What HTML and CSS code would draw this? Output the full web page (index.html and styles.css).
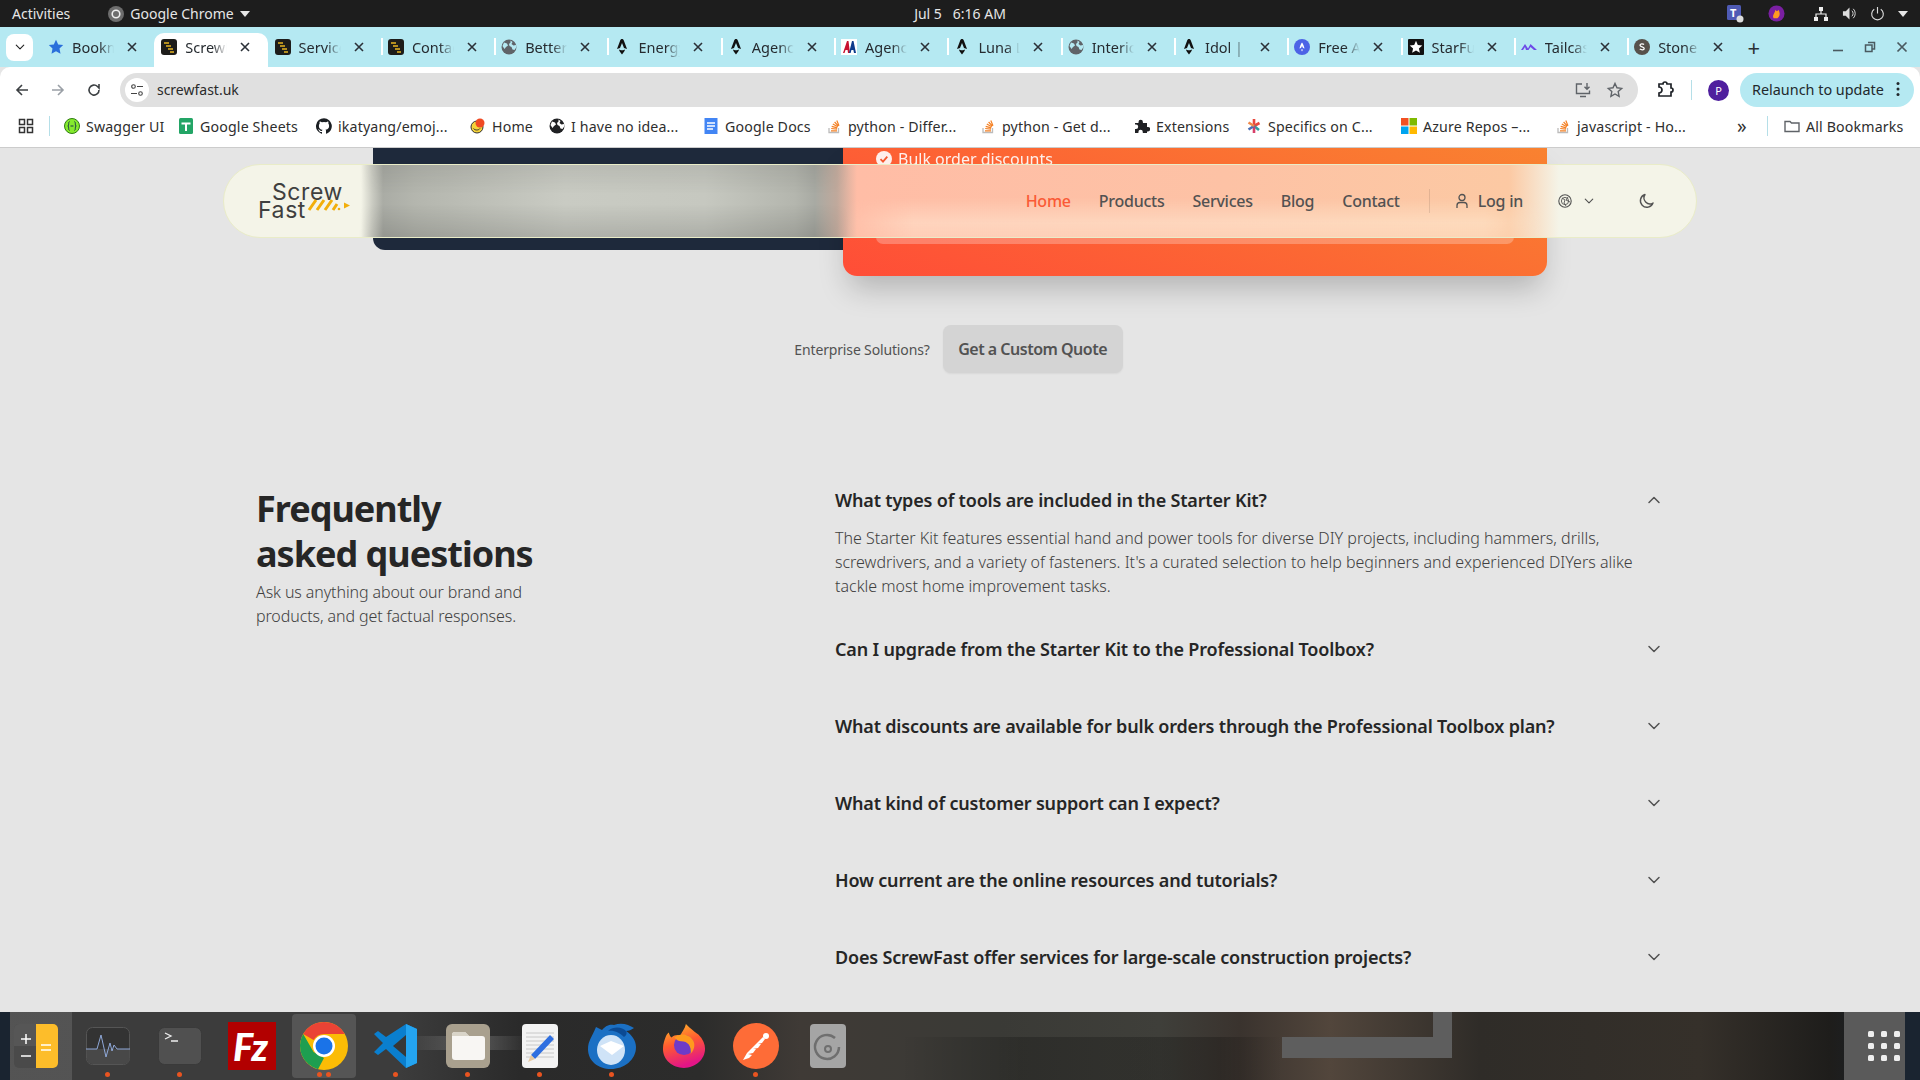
FILE: index.html
```html
<!DOCTYPE html>
<html lang="en">
<head>
<meta charset="utf-8">
<title>ScrewFast</title>
<link rel="stylesheet" href="styles.css">
</head>
<body>
<svg class="defs" width="0" height="0" aria-hidden="true">
  <symbol id="i-close" viewBox="0 0 12 12"><path d="M2 2l8 8M10 2l-8 8" stroke="#2b3138" stroke-width="1.6" fill="none"/></symbol>
  <symbol id="i-sf" viewBox="0 0 16 16"><rect width="16" height="16" rx="3" fill="#1d1c1a"/><path d="M3 4h5M5 7h5M7 10h5M9 13h4" stroke="#e6b422" stroke-width="1.6"/></symbol>
  <symbol id="i-globe" viewBox="0 0 16 16"><circle cx="8" cy="8" r="7.5" fill="#5f6368"/><path d="M3 3.5l3 1 1 2-2 1.500-1.500 2L1.500 7zM9.500 1.500l2 1.500-1 2 2 1.500 2.500-.5.5 2-2 3-2-.5-1-2.500-2-1-.5-2 1.500-1.500z" fill="#b5e9f2"/></symbol>
  <symbol id="i-astro" viewBox="0 0 16 16"><path d="M8 0c1 0 1.500.5 2 2l3 8-3-1-2-5-2 5-3 1 3-8c.5-1.500 1-2 2-2z" fill="#111"/><path d="M5 10.500c1 1 5 1 6 0 0 1.500-1.500 2.500-3 5-1.500-2.500-3-3.500-3-5z" fill="#111"/></symbol>
  <symbol id="i-so" viewBox="0 0 16 16"><path d="M3 10v4.500h9.500V10" fill="none" stroke="#bcbbbb" stroke-width="1.300"/><path d="M5 12.800h6M5.200 10.500l5.800.6M5.700 8.300l5.600 1.600M6.800 6l5 2.800M8.600 4l3.800 4.200M10.800 2.500l2.200 5.200" stroke="#f48024" stroke-width="1.200" fill="none"/></symbol>
  <symbol id="i-chev" viewBox="0 0 16 16"><path d="M3 5.500l5 5 5-5" fill="none" stroke="currentColor" stroke-width="1.500" stroke-linecap="round" stroke-linejoin="round"/></symbol>
</svg>

<header class="topbar">
  <div class="top-left">
    <span class="top-item">Activities</span>
    <span class="top-chrome">
      <svg class="ico16" viewBox="0 0 16 16"><circle cx="8" cy="8" r="8" fill="#6d6d6d"/><circle cx="8" cy="8" r="3.800" fill="none" stroke="#eee" stroke-width="1.600"/></svg>
      Google Chrome <i class="caret"></i>
    </span>
  </div>
  <div class="top-clock">Jul 5&nbsp;&nbsp; 6:16 AM</div>
  <div class="top-tray">
    <svg class="tray-teams" viewBox="0 0 18 18"><rect width="14" height="15" rx="1.500" fill="#4f5bb5"/><text x="3" y="12" class="tray-t">T</text><circle cx="13" cy="14" r="3.500" fill="#ddd"/></svg>
    <svg class="tray-fire" viewBox="0 0 18 18"><circle cx="9" cy="9" r="8.500" fill="#7a1fa2"/><path d="M6 14c-2-3 1-5 2-9 1 2 2 2 3 0 2 3 2 7-1 9z" fill="#ff9a1f"/></svg>
    <svg class="tray-net" viewBox="0 0 16 16"><path d="M6 1h4v4H6zM1 11h4v4H1zM11 11h4v4h-4z" fill="#eee"/><path d="M8 5v3M3 11V8h10v3" stroke="#eee" fill="none" stroke-width="1.200"/></svg>
    <svg class="tray-vol" viewBox="0 0 16 16"><path d="M1 5.500h3l4-4v13l-4-4H1z" fill="#ddd"/><path d="M10.500 5a4 4 0 010 6M12 3a7 7 0 010 10" stroke="#ddd" fill="none"/></svg>
    <svg class="tray-pow" viewBox="0 0 16 16"><path d="M4.500 3.500a6.200 6.200 0 107 0M8 1v7" stroke="#ddd" fill="none" stroke-width="1.200"/></svg>
    <i class="caret"></i>
  </div>
</header>

<nav class="tabstrip">
  <button class="tab-drop"><svg class="ico12 dark" viewBox="0 0 16 16"><use href="#i-chev"/></svg></button>
  <div class="tabs">
    <div class="tab">
      <svg class="tab-ico" viewBox="0 0 16 16"><path d="M8 .8l2.200 4.700 5 .6-3.700 3.500 1 5.100L8 12.200l-4.500 2.500 1-5.100L.8 6.100l5-.6z" fill="#2a6fdb"/></svg>
      <span class="tab-title">Bookmarks</span><svg class="tab-x"><use href="#i-close"/></svg>
    </div>
    <div class="tab tab-active">
      <svg class="tab-ico"><use href="#i-sf"/></svg>
      <span class="tab-title">ScrewFast</span><svg class="tab-x"><use href="#i-close"/></svg>
    </div>
    <div class="tab tab-nosep">
      <svg class="tab-ico"><use href="#i-sf"/></svg>
      <span class="tab-title">Services</span><svg class="tab-x"><use href="#i-close"/></svg>
    </div>
    <div class="tab">
      <svg class="tab-ico"><use href="#i-sf"/></svg>
      <span class="tab-title">Contact</span><svg class="tab-x"><use href="#i-close"/></svg>
    </div>
    <div class="tab">
      <svg class="tab-ico"><use href="#i-globe"/></svg>
      <span class="tab-title">Better</span><svg class="tab-x"><use href="#i-close"/></svg>
    </div>
    <div class="tab">
      <svg class="tab-ico"><use href="#i-astro"/></svg>
      <span class="tab-title">Energy</span><svg class="tab-x"><use href="#i-close"/></svg>
    </div>
    <div class="tab">
      <svg class="tab-ico"><use href="#i-astro"/></svg>
      <span class="tab-title">Agency</span><svg class="tab-x"><use href="#i-close"/></svg>
    </div>
    <div class="tab">
      <svg class="tab-ico" viewBox="0 0 16 16"><rect width="16" height="16" fill="#fff"/><path d="M2 14L6 2h1.500L9 14H7l-.4-3H4.500l-1 3z" fill="#c8102e"/><path d="M8 14l3-12h1.500L15 14h-2l-.6-3h-2l-.8 3z" fill="#0d3b8c"/></svg>
      <span class="tab-title">Agency</span><svg class="tab-x"><use href="#i-close"/></svg>
    </div>
    <div class="tab">
      <svg class="tab-ico"><use href="#i-astro"/></svg>
      <span class="tab-title">Luna Lite</span><svg class="tab-x"><use href="#i-close"/></svg>
    </div>
    <div class="tab">
      <svg class="tab-ico"><use href="#i-globe"/></svg>
      <span class="tab-title">Interior</span><svg class="tab-x"><use href="#i-close"/></svg>
    </div>
    <div class="tab">
      <svg class="tab-ico"><use href="#i-astro"/></svg>
      <span class="tab-title">Idol | Next</span><svg class="tab-x"><use href="#i-close"/></svg>
    </div>
    <div class="tab">
      <svg class="tab-ico" viewBox="0 0 16 16"><circle cx="8" cy="8" r="8" fill="#4c63e6"/><path d="M8 3.500c1 1 2 3.500 2.500 6l-1.500-.5-1-2-1 2-1.500.5C6 7 7 4.500 8 3.500zM7 10.500h2L8 12.500z" fill="#fff"/></svg>
      <span class="tab-title">Free Astro</span><svg class="tab-x"><use href="#i-close"/></svg>
    </div>
    <div class="tab">
      <svg class="tab-ico" viewBox="0 0 16 16"><rect width="16" height="16" rx="1" fill="#111"/><path d="M8 1.800l1.800 4.200 4.500.4-3.400 3 1 4.400L8 11.500l-3.900 2.300 1-4.400-3.400-3 4.500-.4z" fill="#fff"/></svg>
      <span class="tab-title">StarFunnel</span><svg class="tab-x"><use href="#i-close"/></svg>
    </div>
    <div class="tab">
      <svg class="tab-ico" viewBox="0 0 16 16"><path d="M0 11l4-6 3 4.500L9.500 5 16 11h-3L9.500 8 7.500 11H5L4 8l-2 3z" fill="#6d4ae8"/></svg>
      <span class="tab-title">Tailcast</span><svg class="tab-x"><use href="#i-close"/></svg>
    </div>
    <div class="tab">
      <svg class="tab-ico" viewBox="0 0 16 16"><circle cx="8" cy="8" r="8" fill="#57514b"/><path d="M10 5.500c-1-1-4-1-4 .8 0 2 4.200 1.200 4.200 3.200 0 1.800-3.200 1.600-4.400.4" stroke="#fff" stroke-width="1.300" fill="none"/></svg>
      <span class="tab-title">Stone Rows</span><svg class="tab-x"><use href="#i-close"/></svg>
    </div>
  </div>
  <span class="tab-new">+</span>
  <div class="win-ctrls">
    <svg class="win-ico" viewBox="0 0 12 12"><path d="M1 9.500h10" stroke="#4a5a60" stroke-width="1.600"/></svg>
    <svg class="win-ico" viewBox="0 0 12 12"><path d="M4 1.500h6.500V8H8M1.500 4H8v6.500H1.500z" stroke="#4a5a60" stroke-width="1.500" fill="none"/></svg>
    <svg class="win-ico" viewBox="0 0 12 12"><path d="M1.500 1.500l9 9M10.500 1.500l-9 9" stroke="#4a5a60" stroke-width="1.700"/></svg>
  </div>
</nav>

<section class="toolbar">
  <div class="tool-nav">
    <svg class="ico16" viewBox="0 0 16 16"><path d="M14 8H3M8 3L3 8l5 5" fill="none" stroke="#3c4043" stroke-width="1.600"/></svg>
    <svg class="ico16" viewBox="0 0 16 16"><path d="M2 8h11M8 3l5 5-5 5" fill="none" stroke="#9aa0a6" stroke-width="1.600"/></svg>
    <svg class="ico16" viewBox="0 0 16 16"><path d="M13 8a5 5 0 11-1.500-3.500L13 6V2" fill="none" stroke="#3c4043" stroke-width="1.600"/></svg>
  </div>
  <div class="urlbar">
    <span class="site-chip"><svg class="ico14" viewBox="0 0 14 14"><circle cx="3.500" cy="3.500" r="1.800" fill="none" stroke="#444" stroke-width="1.100"/><path d="M7 3.500h6M1 10.500h6" stroke="#444" stroke-width="1.100"/><circle cx="10.500" cy="10.500" r="1.800" fill="none" stroke="#444" stroke-width="1.100"/></svg></span>
    <span class="url-text">screwfast.uk</span>
    <span class="url-end">
      <svg class="ico18" viewBox="0 0 18 18"><path d="M8 3H2.500v9.500h13V9.500M6 15.500h6" stroke="#5f6368" stroke-width="1.400" fill="none"/><path d="M13 2v6M10.500 5.800L13 8.300l2.500-2.500" stroke="#5f6368" stroke-width="1.400" fill="none"/></svg>
      <svg class="ico18" viewBox="0 0 18 18"><path d="M9 2.500l2 4.300 4.700.6-3.500 3.200.9 4.700L9 13l-4.100 2.300.9-4.700L2.300 7.400 7 6.800z" stroke="#5f6368" stroke-width="1.400" fill="none"/></svg>
    </span>
  </div>
  <div class="tool-right">
    <svg class="ico18" viewBox="0 0 18 18"><path d="M3 3h4a2 2 0 014 0h4v4a2 2 0 010 4v4H3v-3a2 2 0 000-6z" fill="none" stroke="#1f2328" stroke-width="1.700"/></svg>
    <i class="tool-sep"></i>
    <span class="avatar">P</span>
    <span class="relaunch">Relaunch to update <svg class="dots3" viewBox="0 0 4 16"><circle cx="2" cy="2.500" r="1.500"/><circle cx="2" cy="8" r="1.500"/><circle cx="2" cy="13.500" r="1.500"/></svg></span>
  </div>
</section>

<section class="bookmarks">
  <svg class="ico16" viewBox="0 0 16 16"><path d="M1.500 1.500h5v5h-5zM9.500 1.500h5v5h-5zM1.500 9.500h5v5h-5zM9.500 9.500h5v5h-5z" fill="none" stroke="#333" stroke-width="1.500"/></svg>
  <i class="bm-sep"></i>
  <span class="bm"><svg class="ico16" viewBox="0 0 16 16"><circle cx="8" cy="8" r="7.500" fill="#85ea2d" stroke="#2e7d12"/><path d="M5.500 3.500c-1.500 1-.2 3-1.500 4.500 1.300 1.500 0 3.500 1.500 4.500M10.500 3.500c1.500 1 .2 3 1.500 4.500-1.300 1.500 0 3.500-1.500 4.500M6.500 8h3" stroke="#173647" fill="none"/></svg>Swagger UI</span>
  <span class="bm"><svg class="ico16" viewBox="0 0 16 16"><rect x="1" width="14" height="16" rx="1.500" fill="#23a566"/><path d="M3.500 5.500h9M8 5.500V13" stroke="#fff" stroke-width="2"/></svg>Google Sheets</span>
  <span class="bm"><svg class="ico16" viewBox="0 0 16 16"><path d="M8 .2a8 8 0 00-2.500 15.600c.4.100.5-.2.500-.4v-1.400c-2.200.5-2.700-1-2.700-1-.4-.9-.9-1.200-.9-1.200-.7-.5.100-.5.100-.5.800.100 1.200.8 1.200.8.700 1.200 1.900.9 2.300.7.100-.5.300-.9.500-1.100-1.800-.2-3.600-.9-3.600-4 0-.9.300-1.600.8-2.100-.1-.2-.4-1 .1-2.100 0 0 .7-.2 2.200.8a7.600 7.600 0 014 0c1.500-1 2.200-.8 2.200-.8.400 1.100.2 1.900.1 2.100.5.600.8 1.300.8 2.100 0 3.100-1.900 3.700-3.600 3.900.3.200.5.700.5 1.500v2.200c0 .2.100.5.600.4A8 8 0 008 .2z" fill="#1b1f23"/></svg>ikatyang/emoj...</span>
  <span class="bm"><svg class="ico16" viewBox="0 0 16 16"><circle cx="7" cy="9" r="6" fill="#f5d33a" stroke="#333"/><path d="M3.500 10.500c1.500 2 5 2 6.500 0" stroke="#333" fill="none"/><circle cx="10" cy="5" r="4.500" fill="#f04a23"/></svg>Home</span>
  <span class="bm"><svg class="ico16" viewBox="0 0 16 16"><circle cx="8" cy="8" r="7.500" fill="#202124"/><path d="M3 3.500l3 1 1 2-2 1.500-1.500 2L1.500 7zM9.500 1.500l2 1.500-1 2 2 1.500 2.500-.5.5 2-2 3-2-.5-1-2.500-2-1-.5-2 1.500-1.500z" fill="#fff"/></svg>I have no idea...</span>
  <span class="bm"><svg class="ico16" viewBox="0 0 16 16"><path d="M1.500 0h13v16h-13z" fill="#4285f4"/><path d="M4 5h8M4 8h8M4 11h6" stroke="#fff" stroke-width="1.500"/></svg>Google Docs</span>
  <span class="bm"><svg class="ico16"><use href="#i-so"/></svg>python - Differ...</span>
  <span class="bm"><svg class="ico16"><use href="#i-so"/></svg>python - Get d...</span>
  <span class="bm"><svg class="ico16" viewBox="0 0 16 16"><path d="M1 5h3.500V4a2.200 2.200 0 014.400 0v1H13v4h1a2.200 2.200 0 010 4.400h-1V15H8.800v-1a2.200 2.200 0 00-4.400 0v1H1v-4h1a2.200 2.200 0 000-4.400H1z" fill="#202124"/></svg>Extensions</span>
  <span class="bm"><svg class="ico16" viewBox="0 0 16 16"><path d="M8 1v6" stroke="#e8483d" stroke-width="2.600"/><path d="M8 8l5.500-3" stroke="#e8483d" stroke-width="2.600"/><path d="M8 8l5 4" stroke="#2f9da0" stroke-width="2.600"/><path d="M8 8v7" stroke="#d8406a" stroke-width="2.600"/><path d="M8 8l-5.500 3.500" stroke="#4a6fb5" stroke-width="2.600"/><path d="M8 8L2.500 4.500" stroke="#f0884a" stroke-width="2.600"/></svg>Specifics on C...</span>
  <span class="bm"><svg class="ico16" viewBox="0 0 16 16"><path d="M0 0h7.500v7.500H0z" fill="#f25022"/><path d="M8.500 0H16v7.500H8.500z" fill="#7fba00"/><path d="M0 8.500h7.500V16H0z" fill="#00a4ef"/><path d="M8.500 8.500H16V16H8.500z" fill="#ffb900"/></svg>Azure Repos –...</span>
  <span class="bm"><svg class="ico16"><use href="#i-so"/></svg>javascript - Ho...</span>
  <span class="bm-more">»</span>
  <i class="bm-sep"></i>
  <span class="bm"><svg class="ico16" viewBox="0 0 16 16"><path d="M1 3.500h5l1.500 1.500h7.500v8.500H1z" fill="none" stroke="#5f6368" stroke-width="1.400"/></svg>All Bookmarks</span>
</section>

<main class="page">
  <header class="site-nav">
    <a class="logo">
      <svg class="logo-svg" viewBox="0 0 92 37">
        <text x="14" y="17" class="logo-text">Screw</text>
        <text x="0" y="35" class="logo-text">Fast</text>
        <path d="M51 27l7-10M59 27l7-10M67 27l7-10M75 27l4-6" stroke="#f2ae0a" stroke-width="3" fill="none"/>
        <path d="M86 19.500l6 3-6 3z" fill="#f2ae0a"/>
        <circle cx="81" cy="26" r="1.300" fill="#f2ae0a"/>
      </svg>
    </a>
    <div class="nav-links">
      <a class="nav-link nav-home">Home</a>
      <a class="nav-link">Products</a>
      <a class="nav-link">Services</a>
      <a class="nav-link">Blog</a>
      <a class="nav-link nav-last">Contact</a>
      <i class="nav-div"></i>
      <a class="nav-link nav-login">
        <svg class="ico16" viewBox="0 0 16 16"><circle cx="8" cy="4.500" r="3" fill="none" stroke="#525252" stroke-width="1.300"/><path d="M3 15v-2.500c0-2 1.500-3 3-3h4c1.500 0 3 1 3 3V15" fill="none" stroke="#525252" stroke-width="1.300"/></svg>
        Log in
      </a>
      <span class="nav-lang">
        <svg class="ico14" viewBox="0 0 14 14"><circle cx="7" cy="7" r="6.200" fill="none" stroke="#525252" stroke-width="1.100"/><circle cx="7" cy="7" r="3.600" fill="none" stroke="#525252" stroke-width=".9"/><path d="M4 4l3 2-1 3 2 3M10 3L8 6l4 2" fill="none" stroke="#525252" stroke-width=".9"/></svg>
        <svg class="ico12 nav-chev" viewBox="0 0 16 16"><use href="#i-chev"/></svg>
      </span>
      <svg class="ico16 nav-moon" viewBox="0 0 16 16"><path d="M7 1.500a6.500 6.500 0 108 8.500A6 6 0 017 1.500z" fill="none" stroke="#525252" stroke-width="1.400" stroke-linejoin="round"/></svg>
    </div>
  </header>

  <div class="pricing">
    <div class="card-dark"></div>
    <div class="card-orange">
      <p class="perk"><svg class="ico16" viewBox="0 0 16 16"><circle cx="8" cy="8" r="8" fill="#fff"/><path d="M4.500 8.200l2.500 2.500 4.300-5" fill="none" stroke="#f4582f" stroke-width="1.800"/></svg>Bulk order discounts</p>
      <div class="card-btn"></div>
    </div>
  </div>

  <div class="enterprise">
    <span class="ent-label">Enterprise Solutions?</span>
    <a class="ent-btn">Get a Custom Quote</a>
  </div>

  <section class="faq">
    <div class="faq-intro">
      <h2 class="faq-h">Frequently<br>asked questions</h2>
      <p class="faq-sub">Ask us anything about our brand and<br>products, and get factual responses.</p>
    </div>
    <div class="faq-list">
      <div class="qa qa-open">
        <div class="q"><span>What types of tools are included in the Starter Kit?</span><svg class="ico16 q-chev q-up" viewBox="0 0 16 16"><use href="#i-chev"/></svg></div>
        <p class="a">The Starter Kit features essential hand and power tools for diverse DIY projects, including hammers, drills, screwdrivers, and a variety of fasteners. It's a curated selection to help beginners and experienced DIYers alike tackle most home improvement tasks.</p>
      </div>
      <div class="qa"><div class="q"><span>Can I upgrade from the Starter Kit to the Professional Toolbox?</span><svg class="ico16 q-chev" viewBox="0 0 16 16"><use href="#i-chev"/></svg></div></div>
      <div class="qa"><div class="q"><span>What discounts are available for bulk orders through the Professional Toolbox plan?</span><svg class="ico16 q-chev" viewBox="0 0 16 16"><use href="#i-chev"/></svg></div></div>
      <div class="qa"><div class="q"><span>What kind of customer support can I expect?</span><svg class="ico16 q-chev" viewBox="0 0 16 16"><use href="#i-chev"/></svg></div></div>
      <div class="qa"><div class="q"><span>How current are the online resources and tutorials?</span><svg class="ico16 q-chev" viewBox="0 0 16 16"><use href="#i-chev"/></svg></div></div>
      <div class="qa"><div class="q"><span>Does ScrewFast offer services for large-scale construction projects?</span><svg class="ico16 q-chev" viewBox="0 0 16 16"><use href="#i-chev"/></svg></div></div>
    </div>
  </section>
</main>

<footer class="dock">
  <div class="dock-item">
    <svg class="dock-ico" viewBox="0 0 44 44"><rect width="44" height="44" rx="5" fill="#4a4a4a"/><path d="M22 0h17a5 5 0 015 5v34a5 5 0 01-5 5H22z" fill="#fdbd2a"/><path d="M0 22V5a5 5 0 015-5h17v22z" fill="#565656"/><path d="M7 15h10M12 10v10M7 32h10" stroke="#fff" stroke-width="1.500"/><path d="M27 21h10M27 26h10" stroke="#fff" stroke-width="1.500"/></svg>
  </div>
  <div class="dock-item dock-run">
    <svg class="dock-ico" viewBox="0 0 44 38"><rect x=".5" y=".5" width="43" height="37" rx="6" fill="#333" stroke="#555"/><path d="M.5 22h43v10a5 5 0 01-5 5H6a5 5 0 01-5-5z" fill="#484848"/><path d="M0 22h11l4-14 5 22 4-14 2 8 2-6 3 4h13" fill="none" stroke="#8fa8d8" stroke-width="1"/></svg>
  </div>
  <div class="dock-item dock-run">
    <svg class="dock-ico" viewBox="0 0 44 38"><rect x=".5" y=".5" width="43" height="37" rx="6" fill="#505050" stroke="#3a3a3a"/><path d="M7 6l6 3-6 3M13 14h7" fill="none" stroke="#eee" stroke-width="1.300"/></svg>
  </div>
  <div class="dock-item">
    <svg class="dock-ico dock-fz" viewBox="0 0 48 48"><rect width="48" height="48" fill="#b20000" stroke="#b20000" stroke-width="1" stroke-dasharray="2 2"/><text x="5" y="39" class="fz-text">Fz</text></svg>
  </div>
  <div class="dock-item dock-chrome dock-run2">
    <svg class="dock-ico dock-48" viewBox="0 0 48 48"><circle cx="24" cy="24" r="24" fill="#fbbc05"/><path d="M24 0a24 24 0 0120.800 12H24a12 12 0 00-10.400 6L3.200 12A24 24 0 0124 0z" fill="#ea4335"/><path d="M3.200 12L13.600 30 24 36 18 47.200A24 24 0 013.200 12z" fill="#1e9e50"/><circle cx="24" cy="24" r="11" fill="#fff"/><circle cx="24" cy="24" r="8.500" fill="#1a73e8"/></svg>
  </div>
  <div class="dock-item dock-run">
    <svg class="dock-ico" viewBox="0 0 44 44"><path d="M32 0l11 5v34l-11 5-20-19-8 6-4-3 9-9-9-9 4-3 8 6z" fill="#0a7fcf"/><path d="M32 0l11 5v34l-11 5z" fill="#24a4f0"/><path d="M32 11L19 22l13 11z" fill="#373737"/></svg>
  </div>
  <div class="dock-item dock-run">
    <svg class="dock-ico" viewBox="0 0 44 44"><rect width="44" height="44" rx="6" fill="#a9a08e"/><path d="M6 11a3 3 0 013-3h10l4 4h13a3 3 0 013 3v18a3 3 0 01-3 3H9a3 3 0 01-3-3z" fill="#f8f6f3"/><path d="M6 11a3 3 0 013-3h10l4 4H6z" fill="#d9d4c8"/></svg>
  </div>
  <div class="dock-item dock-run">
    <svg class="dock-ico dock-36" viewBox="0 0 36 44"><rect width="36" height="44" rx="4" fill="#f3f3f3"/><path d="M4 9h28M4 13h28M4 17h28M4 21h28M4 25h28M4 29h28M4 33h28" stroke="#c8c8c8"/><path d="M9 31L28 11l4 4-19 20z" fill="#2f6fe0"/><path d="M9 31l4 4-7 3z" fill="#e8c9a0"/></svg>
  </div>
  <div class="dock-item dock-run">
    <svg class="dock-ico dock-48" viewBox="0 0 48 46"><path d="M8 4C4 14 0 18 0 26c0 12 10 20 23 20s25-9 25-22C48 18 44 12 38 8c3 0 5-1 8-3-5-3-12-6-20-3-6-1-9 2-12 5-2-1-4-2-6-3z" fill="#1b70c4"/><path d="M38 8c-4-4-12-5-18 0 6-1 12 2 16 6 3-2 3-4 2-6z" fill="#0b4a94"/><ellipse cx="23" cy="27" rx="14" ry="15" fill="#cfe3f7"/><path d="M12 23l11-5 13 5-12 9z" fill="#fff"/></svg>
  </div>
  <div class="dock-item">
    <svg class="dock-ico" viewBox="0 0 44 46"><defs><linearGradient id="ffg" x1="0" y1="0" x2=".3" y2="1"><stop offset="0" stop-color="#ffc328"/><stop offset=".5" stop-color="#ff5a30"/><stop offset="1" stop-color="#e31587"/></linearGradient></defs><path d="M24 0c6 6 9 8 13 11 5 5 7 10 7 15 0 11-10 20-22 20S0 38 0 26c0-6 2-10 3-13 1-2 2-3 3-4 1 2 1 4 3 5 3-3 7-3 9-2 2-4 5-7 6-12z" fill="url(#ffg)"/><circle cx="22" cy="22" r="10.500" fill="#6e3bc8"/><path d="M12 14c6-5 16-4 20 4 2 5 0 10-3 13 1-8-3-13-10-13-3 0-5-2-7-4z" fill="#ff9a1e"/></svg>
  </div>
  <div class="dock-item dock-run">
    <svg class="dock-ico dock-46" viewBox="0 0 46 46"><circle cx="23" cy="23" r="23" fill="#fe6c37"/><circle cx="33" cy="13" r="3" fill="#fff"/><path d="M30 14L14 30l-4 7 6-2 3-3-4-1 5-1 3-4-3 0 5-1 3-4-3 0 4-1 3-4z" fill="#fff"/></svg>
  </div>
  <div class="dock-item">
    <svg class="dock-ico dock-36" viewBox="0 0 36 44"><rect width="36" height="44" rx="4" fill="#a5a5a5"/><path d="M25 14a12 12 0 10 4 9" fill="none" stroke="#6f6f6f" stroke-width="2.500"/><circle cx="18" cy="25" r="3" fill="none" stroke="#6f6f6f" stroke-width="2"/></svg>
  </div>
  <div class="dock-spacer"></div>
  <div class="dock-apps">
    <span></span><span></span><span></span><span></span><span></span><span></span><span></span><span></span><span></span>
  </div>
</footer>
</body>
</html>
```

FILE: styles.css
```css
* { box-sizing: border-box; }
html, body { margin: 0; padding: 0; height: 100%; overflow: hidden; }
body {
  width: 1920px;
  height: 1080px;
  display: flex;
  flex-direction: column;
  font-family: "Noto Sans", Lato, sans-serif;
  background: #e5e5e5;
}
svg { display: block; flex: none; }
.defs { position: absolute; }
i { display: block; }
.ico12 { width: 12px; height: 12px; }
.ico14 { width: 14px; height: 14px; }
.ico16 { width: 16px; height: 16px; }
.ico18 { width: 18px; height: 18px; }
.dark { color: #222; }

/* GNOME bar */
.topbar {
  height: 27px;
  flex: none;
  background: #1d1d1d;
  color: #e6e6e6;
  font-size: 14px;
  display: grid;
  grid-template-columns: 1fr auto 1fr;
  align-items: center;
  padding: 0 12px;
}
.top-left { display: flex; align-items: center; gap: 38px; }
.top-chrome { display: flex; align-items: center; gap: 6px; }
.caret { width: 0; height: 0; border: 5px solid transparent; border-top: 6px solid #e6e6e6; border-bottom: 0; }
.top-tray { display: flex; align-items: center; justify-content: flex-end; gap: 13px; }
.tray-teams { width: 18px; height: 18px; margin-right: 10px; }
.tray-fire { width: 17px; height: 17px; margin-right: 15px; }
.tray-net { width: 16px; height: 16px; }
.tray-vol { width: 15px; height: 15px; }
.tray-pow { width: 15px; height: 15px; }
.tray-t { font: bold 11px "Noto Sans", sans-serif; fill: #fff; }

/* tabs */
.tabstrip {
  height: 40px;
  flex: none;
  background: #b5e9f2;
  display: flex;
  align-items: center;
  padding-left: 6px;
  color: #262b30;
}
.tab-drop {
  width: 27px;
  height: 27px;
  margin-right: 8px;
  border: 0;
  border-radius: 8px;
  background: #fff;
  display: flex;
  align-items: center;
  justify-content: center;
  padding: 0;
}
.tabs { display: flex; height: 100%; }
.tab {
  width: 113.300px;
  height: 100%;
  display: flex;
  align-items: center;
  padding: 0 0 0 7px;
  position: relative;
  font-size: 14.500px;
}
.tab::before {
  content: "";
  position: absolute;
  left: 0;
  top: 11px;
  width: 2px;
  height: 17px;
  background: #fff;
}
.tab:first-child::before, .tab-active::before, .tab-nosep::before { display: none; }
.tab-active {
  background: #fff;
  border-radius: 10px 10px 0 0;
  margin-top: 6px;
  height: 34px;
  padding-bottom: 6px;
}
.tab-ico { width: 16px; height: 16px; }
.tab-title {
  width: 42px;
  margin-left: 8px;
  white-space: nowrap;
  overflow: hidden;
  -webkit-mask-image: linear-gradient(90deg, #000 65%, transparent);
  mask-image: linear-gradient(90deg, #000 65%, transparent);
}
.tab-x { width: 12px; height: 12px; margin-left: 12px; }
.tab-new { font-size: 22px; color: #2a3036; margin-left: 7px; line-height: 1; }
.win-ctrls { margin-left: auto; display: flex; gap: 20px; padding-right: 12px; }
.win-ico { width: 12px; height: 12px; }

/* toolbar */
.toolbar {
  height: 40px;
  flex: none;
  background: #fff;
  border-radius: 10px 10px 0 0;
  display: flex;
  align-items: flex-end;
  padding: 0 6px 0 14px;
}
.tool-nav { display: flex; gap: 20px; align-items: center; height: 34px; width: 106px; }
.urlbar {
  height: 34px;
  width: 1519px;
  background: #e0e0e0;
  border-radius: 17px;
  display: flex;
  align-items: center;
  padding: 0 14px 0 5px;
}
.site-chip {
  width: 24px;
  height: 24px;
  border-radius: 50%;
  background: #fff;
  display: flex;
  align-items: center;
  justify-content: center;
}
.url-text { margin-left: 8px; font-size: 14px; color: #2b2b2b; padding-bottom: 2px; }
.url-end { margin-left: auto; display: flex; gap: 14px; align-items: center; }
.tool-right { display: flex; align-items: center; height: 34px; margin-left: 18px; }
.tool-sep { width: 1px; height: 20px; background: #b5dfe8; margin: 0 16px 0 17px; }
.avatar {
  width: 21px;
  height: 21px;
  border-radius: 50%;
  background: #4f1f9e;
  color: #fff;
  font-size: 11px;
  display: flex;
  align-items: center;
  justify-content: center;
}
.relaunch {
  width: 174px;
  height: 34px;
  margin-left: 11px;
  background: #b5e9f2;
  border-radius: 17px;
  display: flex;
  align-items: center;
  padding: 0 0 2px 12px;
  font-size: 14.400px;
  color: #22282c;
  white-space: nowrap;
}
.dots3 { width: 4px; height: 16px; margin-left: auto; margin-right: 14px; fill: #22282c; }

/* bookmarks */
.bookmarks {
  height: 41px;
  flex: none;
  background: #fff;
  border-bottom: 1px solid #ccc;
  display: grid;
  grid-template-columns: 31px 15px 114px 138px 154px 79px 154px 123px 154px 154px 112px 155px 154px 182px 30px 17px 1fr;
  align-items: center;
  padding: 0 0 2px 18px;
  font-size: 14.200px;
  letter-spacing: .15px;
  color: #2e2e2e;
  white-space: nowrap;
}
.bm-sep { width: 1px; height: 20px; background: #b5dfe8; }
.bm { display: flex; align-items: center; gap: 6px; }
.bm-more { font-size: 19px; color: #333; line-height: 1; }

/* page */
.page {
  flex: 1;
  min-height: 0;
  position: relative;
  overflow: hidden;
  background: #e5e5e5;
  color: #262626;
}
.site-nav {
  position: absolute;
  z-index: 5;
  left: 223px;
  top: 16px;
  width: 1474px;
  height: 74px;
  border-radius: 37px;
  border: 1px solid #e9ecc8;
  background: linear-gradient(90deg,
      #f4f4e8 137px, #c8c9c0 149px, #aaaca5 159px, #b4b6ae 191px,
      #c9cbc3 341px, #c6c8c0 481px, #b4b6ae 571px, #a8aaa3 591px,
      #c0a99c 613px, #ffbda6 633px, #fdc2a5 1001px, #fcc9a3 1285px,
      #f4f4e8 1335px);
  display: flex;
  align-items: center;
  padding: 0 42px 0 34px;
}
.site-nav::before, .site-nav::after {
  content: "";
  position: absolute;
  inset: 0;
  z-index: -1;
  border-radius: inherit;
}
.site-nav::before {
  background: linear-gradient(180deg, rgba(0,0,0,.08), transparent 40%, transparent 55%, rgba(0,0,0,.13));
  -webkit-mask-image: linear-gradient(90deg, transparent 135px, #000 160px, #000 590px, transparent 625px);
  mask-image: linear-gradient(90deg, transparent 135px, #000 160px, #000 590px, transparent 625px);
}
.site-nav::after {
  background: linear-gradient(180deg, transparent 45%, rgba(255,245,225,.4) 80%, rgba(255,245,225,.3));
  -webkit-mask-image: linear-gradient(90deg, transparent 620px, #000 690px, #000 1260px, transparent 1320px);
  mask-image: linear-gradient(90deg, transparent 620px, #000 690px, #000 1260px, transparent 1320px);
}
.logo { display: block; }
.logo-svg { width: 92px; height: 37px; overflow: visible; }
.logo-text { font: 400 23px Inter, Lato, sans-serif; fill: #3f3f3f; letter-spacing: .6px; }
.nav-links {
  margin-left: auto;
  display: flex;
  align-items: center;
  font-size: 16px;
  font-weight: 500;
  letter-spacing: -.25px;
  color: #525252;
}
.nav-link { display: flex; align-items: center; gap: 8px; margin-right: 28px; white-space: nowrap; }
.nav-home { color: #fa5a36; }
.nav-last { margin-right: 29px; }
.nav-div { width: 1px; height: 24px; background: rgba(0, 0, 0, .1); margin-right: 24px; }
.nav-login { margin-right: 35px; }
.nav-lang { display: flex; align-items: center; gap: 11px; color: #525252; margin-right: 43px; }
.nav-chev { color: #525252; }

/* pricing remains */
.pricing { display: flex; height: 128px; padding-left: 373px; align-items: flex-start; }
.card-dark { width: 471px; height: 102px; background: #1e293b; border-radius: 0 0 0 12px; }
.card-orange {
  width: 704px;
  height: 128px;
  padding: 2px 33px 0;
  display: flex;
  flex-direction: column;
  border-radius: 0 0 14px 14px;
  background: linear-gradient(20deg, #ff4d37, #f98230);
  box-shadow: 0 18px 30px -6px rgba(0, 0, 0, .22);
  color: #fff;
  margin-left: -1px;
}
.perk { margin: 0; display: flex; align-items: center; gap: 6px; font-size: 16px; height: 18px; font-weight: 400; opacity: .9; }
.card-btn { height: 46px; margin-top: 30px; border-radius: 0 0 7px 7px; background: rgba(255, 255, 255, .26); }
.enterprise {
  display: flex;
  align-items: center;
  justify-content: center;
  gap: 13px;
  margin-top: 49px;
  height: 48px;
  padding-right: 3px;
}
.ent-label { font-size: 14px; letter-spacing: -.15px; color: #525252; }
.ent-btn {
  width: 180px;
  height: 48px;
  border-radius: 8px;
  background: #d4d4d4;
  color: #525252;
  font-size: 16px;
  font-weight: 600;
  letter-spacing: -.5px;
  display: flex;
  align-items: center;
  justify-content: center;
  box-shadow: 0 1px 2px rgba(0, 0, 0, .06);
}

/* FAQ */
.faq {
  display: grid;
  grid-template-columns: 579px 830px;
  padding: 113px 0 0 256px;
}
.faq-h { margin: 0; font-size: 36px; line-height: 45px; font-weight: 700; letter-spacing: -1px; color: #262626; }
.faq-sub { margin: 0; font-size: 16px; line-height: 24px; font-weight: 300; letter-spacing: -.1px; color: #404040; padding-top: 4px; }
.q {
  display: flex;
  justify-content: space-between;
  align-items: center;
  font-size: 18px;
  font-weight: 600;
  letter-spacing: -.18px;
  color: #262626;
  height: 27px;
}
.q-chev { color: #525252; margin-right: 3px; }
.q-up { transform: rotate(180deg); }
.qa { height: 77px; }
.qa-open { height: 149px; }
.a { margin: 13px 0 0; font-size: 16px; line-height: 24px; font-weight: 300; color: #404040; }

/* dock */
.dock {
  height: 68px;
  flex: none;
  display: flex;
  align-items: stretch;
  background:
    linear-gradient(#5e5e5e, #5e5e5e) 1282px 25px / 170px 21px no-repeat,
    linear-gradient(#5e5e5e, #5e5e5e) 1433px 0 / 19px 46px no-repeat,
    linear-gradient(90deg, transparent, rgba(0,0,0,.22) 120px, rgba(0,0,0,.22) 320px, transparent) 900px 25px / 382px 43px no-repeat,
    linear-gradient(90deg, transparent, rgba(255,255,255,.14) 40%, rgba(255,255,255,.14) 70%, transparent) 400px 24px / 130px 14px no-repeat,
    linear-gradient(90deg, transparent 0 10px, rgba(255,255,255,.12) 10px 72px, transparent 72px) 0 0 / 72px 100% no-repeat,
    linear-gradient(#5a5a5a, #5a5a5a) 1844px 0 / 61px 100% no-repeat,
    linear-gradient(90deg, #1a2430 0 10px, #3c3c3c 10px 400px, #2a2a2a 520px, #2c2c2b 700px, #3f3a36 800px, #3a3a36 1000px, #3f3f3a 1160px, #3a332e 1240px, #52463c 1330px, #2f2c28 1480px, #35302a 1700px, #1e1d1b 1830px, #1a2430 1905px);
}
.dock-item { width: 72px; flex: none; display: flex; align-items: center; justify-content: center; position: relative; }
.dock-ico { width: 44px; height: 44px; }
.dock-48 { width: 48px; height: 48px; }
.dock-46 { width: 46px; height: 46px; }
.dock-36 { width: 36px; height: 44px; }
.dock-fz { width: 48px; height: 48px; }
.fz-text { font: italic 900 38px Lato, sans-serif; fill: #fff; }
.dock-run::after, .dock-run2::after {
  content: "";
  position: absolute;
  left: 50%;
  bottom: 3px;
  width: 5px;
  height: 5px;
  margin-left: -3px;
  border-radius: 50%;
  background: #e95420;
}
.dock-run2::after { margin-left: -7px; box-shadow: 9px 0 0 #e95420; }
.dock-chrome::before {
  content: "";
  position: absolute;
  left: 4px;
  right: 4px;
  top: 2px;
  bottom: 2px;
  border-radius: 4px;
  background: #555;
}
.dock-chrome svg { position: relative; }
.dock-spacer { flex: 1; }
.dock-apps {
  width: 61px;
  margin-right: 15px;
  padding-left: 24px;
  display: grid;
  grid-template-columns: repeat(3, 6px);
  grid-auto-rows: 6px;
  gap: 6px 7px;
  align-content: center;
  justify-content: start;
}
.dock-apps span { background: #eee; border-radius: 1.500px; }
```
